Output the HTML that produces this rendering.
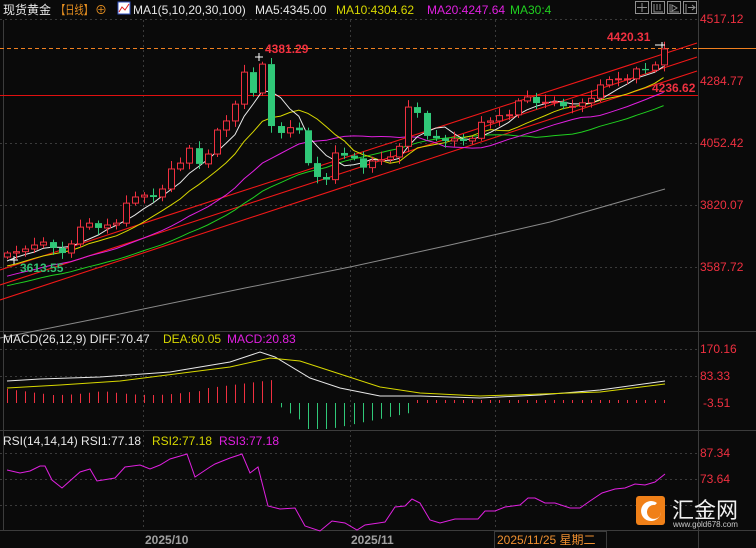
<!DOCTYPE html>
<html><head><meta charset="utf-8"><style>
html,body{margin:0;padding:0;background:#0a0a0a;width:756px;height:548px;overflow:hidden}
svg{display:block}
text{font-family:"Liberation Sans","Noto Sans CJK SC",sans-serif}
</style></head><body>
<svg id="s" width="756" height="548" xmlns="http://www.w3.org/2000/svg">
<rect width="756" height="548" fill="#0a0a0a"/>
<g id="grid" stroke="#3a3a3a" stroke-dasharray="2,3" stroke-width="1">
<line x1="0" y1="19.5" x2="698" y2="19.5"/><line x1="0" y1="143.5" x2="698" y2="143.5"/><line x1="0" y1="205.5" x2="698" y2="205.5"/><line x1="0" y1="267.5" x2="698" y2="267.5"/>
<line x1="0" y1="349.5" x2="698" y2="349.5"/><line x1="0" y1="376.5" x2="698" y2="376.5"/><line x1="0" y1="453.5" x2="698" y2="453.5"/><line x1="0" y1="479.5" x2="698" y2="479.5"/><line x1="0" y1="505.5" x2="698" y2="505.5"/>
<line x1="143.5" y1="20" x2="143.5" y2="530"/><line x1="350.5" y1="20" x2="350.5" y2="530"/><line x1="495.5" y1="20" x2="495.5" y2="530"/>
</g>
<g stroke="#3c3c3c" stroke-width="1">
<line x1="0" y1="331.5" x2="756" y2="331.5"/><line x1="0" y1="430.5" x2="756" y2="430.5"/><line x1="0" y1="530.5" x2="756" y2="530.5"/>
<line x1="698.5" y1="0" x2="698.5" y2="548"/><line x1="3.5" y1="20" x2="3.5" y2="530"/>
</g>
<line x1="0" y1="95.5" x2="698" y2="95.5" stroke="#e01010" stroke-width="1"/>
<line x1="0" y1="48.5" x2="698" y2="48.5" stroke="#f08020" stroke-dasharray="4,3"/>
<line x1="698" y1="48.5" x2="756" y2="48.5" stroke="#f08020"/>
<g stroke="#f01818" stroke-width="1.1">
<line x1="0" y1="270" x2="697" y2="43"/><line x1="0" y1="285" x2="697" y2="57"/><line x1="0" y1="300" x2="697" y2="71"/>
</g>
<polyline fill="none" stroke="#8a8a8a" stroke-width="1" points="0,338 100,318 245,288 350,267 450,245 550,222 665,189"/>
<g id="mas"></g>
<g id="candles"></g>
<g id="macd"></g>
<polyline fill="none" stroke="#e8e8e8" points="7,381 40,379 100,377 170,372 230,362 260,352 275,357 310,378 340,388 380,396 420,396 480,398 540,395 600,390 665,381"/>
<polyline fill="none" stroke="#d8d800" points="7,388 60,385 120,381 230,367 270,358 300,361 340,374 380,387 420,393 480,396 600,392 665,384"/>
<polyline fill="none" stroke="#e020e0" points="7,470 20,473 30,471 40,466 45,466 52,480 62,488 80,472 90,469 97,481 115,478 125,467 140,465 150,469 160,465 170,459 187,454 195,477 210,467 215,464 230,458 242,454 250,473 258,467 268,506 280,509 295,508 305,526 320,531 332,521 345,523 357,530 365,525 385,522 395,507 405,506 412,499 420,503 430,520 440,523 455,519 470,519 478,519 485,511 495,511 505,507 520,505 528,498 535,498 545,503 555,503 570,508 580,508 590,501 602,493 615,489 625,488 635,484 645,485 655,482 665,474"/>
<g font-size="12">
<text x="3" y="14" fill="#e8e8e8">现货黄金</text>
<text x="56" y="14" fill="#e89020" textLength="37" lengthAdjust="spacingAndGlyphs">【日线】</text>
<text x="95" y="14" fill="#e89020" font-size="12">⊕</text>
<rect x="118" y="2" width="12" height="12" fill="#fff" stroke="#3050c0"/><polyline points="119,12 122,7 125,10 129,4" fill="none" stroke="#e02020"/>
<text x="133" y="14" fill="#e8e8e8">MA1(5,10,20,30,100)</text>
<text x="255" y="14" fill="#e8e8e8">MA5:4345.00</text>
<text x="336" y="14" fill="#d8d800">MA10:4304.62</text>
<text x="427" y="14" fill="#e020e0">MA20:4247.64</text>
<text x="510" y="14" fill="#20d020">MA30:4</text>
</g>
<g fill="none" stroke="#909090">
<rect x="635.5" y="1.5" width="13" height="12"/><rect x="651.5" y="1.5" width="13" height="12"/><rect x="667.5" y="1.5" width="13" height="12"/><rect x="683.5" y="1.5" width="13" height="12"/>
<path d="M642 3v9M637 7.5h10M654 4v8h9M657 4v6M660 4v6M670 4v8h9M672 5l5 3-5 3zM686 4v9M688 7.5h6M692 5l3 2.5-3 2.5"/>
</g>
<g font-size="12" fill="#f03040">
<text x="700" y="23">4517.12</text><text x="700" y="85">4284.77</text><text x="700" y="147">4052.42</text><text x="700" y="209">3820.07</text><text x="700" y="271">3587.72</text>
<text x="700" y="353">170.16</text><text x="700" y="380">83.33</text><text x="703" y="407">-3.51</text>
<text x="700" y="457">87.34</text><text x="700" y="483">73.64</text>
</g>
<g font-size="12" font-weight="bold">
<text x="607" y="41" fill="#f03040">4420.31</text>
<text x="265" y="53" fill="#f03040">4381.29</text>
<text x="652" y="92" fill="#f03040">4236.62</text>
<text x="20" y="272" fill="#30c070">3613.55</text>
</g>
<path d="M655 45h10M662 42v6M255 57h8M259 53v8M10 260h8M14 256v8" stroke="#fff"/>
<g font-size="12">
<text x="3" y="343" fill="#e8e8e8">MACD(26,12,9) DIFF:70.47</text>
<text x="163" y="343" fill="#d8d800">DEA:60.05</text>
<text x="227" y="343" fill="#e020e0">MACD:20.83</text>
<text x="3" y="445" fill="#e8e8e8">RSI(14,14,14) RSI1:77.18</text>
<text x="152" y="445" fill="#d8d800">RSI2:77.18</text>
<text x="219" y="445" fill="#e020e0">RSI3:77.18</text>
</g>
<g font-size="12" font-weight="bold" fill="#a0a0a0">
<text x="145" y="544">2025/10</text><text x="351" y="544">2025/11</text>
</g>
<rect x="494.5" y="531.5" width="112" height="17" fill="none" stroke="#3c3c3c"/>
<text x="497" y="544" font-size="12" fill="#f09030">2025/11/25 星期二</text>
<rect x="636" y="496" width="29" height="29" rx="3" fill="#f08018"/>
<path d="M657 503a10 10 0 1 0 4 9a7 7 0 1 1 -6 -7z" fill="#fff"/>
<circle cx="653" cy="511" r="5" fill="#f08018"/>
<text x="672" y="518" font-size="22" fill="#f0f0f0">汇金网</text>
<text x="673" y="527" font-size="8" fill="#c8c8c8">www.gold678.com</text>
</svg>
<script>
var C=[3640,3645,3655,3670,3681,3659,3640,3674,3737,3752,3734,3745,3752,3827,3850,3857,3850,3880,3955,3977,4033,3974,4011,4101,4135,4198,4318,4240,4348,4116,4090,4110,4100,3977,3925,3915,4015,4005,3995,3960,3985,3990,4000,4040,4187,4165,4079,4070,4060,4068,4060,4070,4130,4135,4155,4158,4210,4225,4202,4205,4207,4190,4190,4203,4220,4270,4290,4293,4293,4330,4325,4345,4405];
function Y(p){return 19+(4517.12-p)*0.2668}
function X(i){return 7+i*9.12}
var ns="http://www.w3.org/2000/svg",cg=document.getElementById('candles'),mg=document.getElementById('mas');
function el(g,t,a){var e=document.createElementNS(ns,t);for(var k in a)e.setAttribute(k,a[k]);g.appendChild(e);return e}
var hist=[];for(var i=0;i<40;i++)hist.push(3330+i*7.3+Math.sin(i*1.7)*15);
var all=hist.concat(C);
var cols={5:"#e8e8e8",10:"#d8d800",20:"#e020e0",30:"#20d020"};
[30,20,10,5].forEach(function(n){var pts=[];for(var i=0;i<C.length;i++){var j=i+40,s=0;for(var k=j-n+1;k<=j;k++)s+=all[k];pts.push(X(i).toFixed(1)+","+Y(s/n).toFixed(1))}el(mg,'polyline',{points:pts.join(' '),fill:'none',stroke:cols[n],'stroke-width':1})});
for(var i=0;i<C.length;i++){var o=i?C[i-1]:3625,c=C[i];var up=c>=o;var hi=Math.max(o,c)+8+((i*37)%23),lo=Math.min(o,c)-8-((i*53)%19);var x=Math.round(X(i))+0.5;
var col=up?"#f03040":"#30c878";
el(cg,'line',{x1:x,y1:Y(hi),x2:x,y2:Y(Math.max(o,c)),stroke:col});
el(cg,'line',{x1:x,y1:Y(Math.min(o,c)),x2:x,y2:Y(lo),stroke:col});
var h=Math.max(1,Math.abs(Y(o)-Y(c)));
if(up)el(cg,'rect',{x:x-3,y:Y(c),width:6,height:h,fill:'#0a0a0a',stroke:col});
else el(cg,'rect',{x:x-3.5,y:Y(o),width:7,height:h,fill:col});}
var mg2=document.getElementById('macd');
for(var i=0;i<C.length;i++){var x=Math.round(X(i))+0.5,v;
if(x<275){v=12-Math.abs(Math.sin(i*0.3))*4; if(x>200)v=14+(x-200)/8; }
else if(x<410){v=-(x<300?(x-275)/1.5:x<330?26:26-(x-330)/5);}
else v=3;
if(x<60)v=14-i*1.2;
el(mg2,'line',{x1:x,y1:403,x2:x,y2:403-v,stroke:v>0?'#f03040':'#30c878'});}
</script>
</body></html>
